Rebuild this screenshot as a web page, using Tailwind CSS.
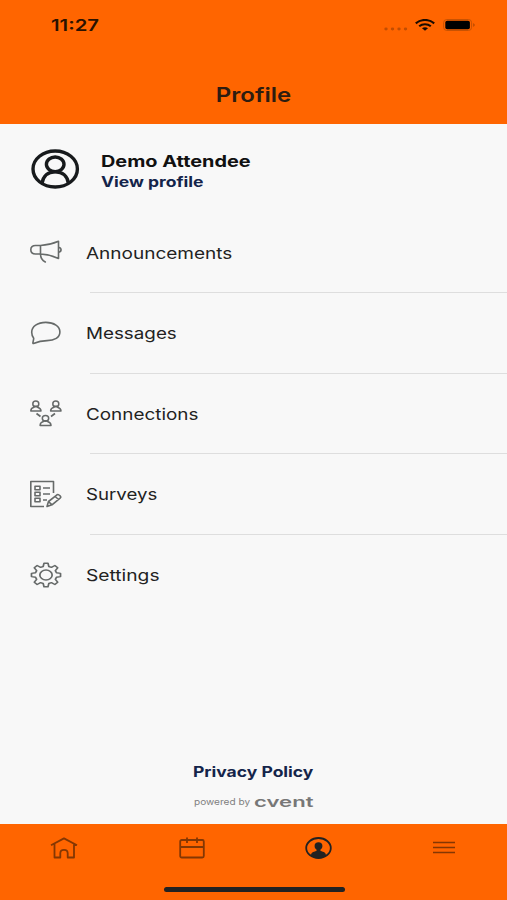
<!DOCTYPE html>
<html lang="en">
<head>
    <meta charset="UTF-8">
    <meta name="viewport" content="width=device-width, initial-scale=1.0">
    <title>Profile</title>
    <script src="https://cdn.jsdelivr.net/npm/@tailwindcss/browser@4"></script>
</head>
<body class="bg-[#f8f8f8] font-['Inter',sans-serif]">
    <div class="w-[507px] h-[900px] flex flex-col overflow-hidden">
        <header class="h-[124px] shrink-0 bg-[#ff6500] flex flex-col">
            <!-- Status bar -->
            <div class="h-[49px] pl-[51px] pr-[31px] flex items-center justify-between">
                <span class="text-[16px] font-semibold text-[#2a1200] origin-left scale-x-[1.27]">11:27</span>
                <div class="flex items-center">
                    <svg class="w-[24px] h-[4px] mt-[9px] mr-[7px]" viewBox="0 0 24 4" fill="#c14d02">
                        <ellipse cx="2" cy="2" rx="1.7" ry="1.4"/>
                        <ellipse cx="8.5" cy="2" rx="1.7" ry="1.4"/>
                        <ellipse cx="15" cy="2" rx="1.7" ry="1.4"/>
                        <ellipse cx="21.5" cy="2" rx="1.7" ry="1.4"/>
                    </svg>
                    <svg class="w-[20px] h-[12px] mr-[8px]" viewBox="0 0 20 12" fill="none" stroke="#1a0b00" stroke-width="2.1">
                        <path d="M.8 4.4C6-.2 14-.2 19.2 4.4"/>
                        <path d="M4.2 7.3C7.400 4.500 12.600 4.500 15.800 7.300"/>
                        <path d="M7 9.300c1.700-1.400 4.300-1.400 6 0L10 11.800z" fill="#1a0b00" stroke="none"/>
                    </svg>
                    <svg class="w-[33px] h-[12px]" viewBox="0 0 33 12">
                        <rect x=".6" y=".5" width="28" height="11" rx="3.2" fill="none" stroke="#c85202"/>
                        <rect x="2.3" y="1.7" width="24.6" height="8.6" rx="1.8" fill="#000"/>
                        <path d="M30.200 4.300c2 .4 2 3 0 3.400z" fill="#b84a02"/>
                    </svg>
                </div>
            </div>
            <h1 class="mt-[31px] text-center text-[20px] leading-[31px] font-semibold text-[#2d1c10] scale-x-[1.2]">Profile</h1>
        </header>

        <main class="flex-1 flex flex-col">
            <div class="h-[88px] pl-[31px] flex items-center">
                <svg class="w-[49px] h-[40px] mr-[21px] mt-[2px]" viewBox="0 0 49 40" fill="none" stroke="#171a1c" stroke-width="3.4">
                    <ellipse cx="24.2" cy="20" rx="22.2" ry="18"/>
                    <ellipse cx="24.2" cy="15.300" rx="8.800" ry="7.300"/>
                    <path d="M11 34.500C12 27 17 22.700 24.200 22.700S36.500 27 37.500 34.500"/>
                </svg>
                <div class="flex flex-col items-start mt-[6px] -ml-[0.5px]">
                    <span class="text-[16px] leading-[21px] font-bold text-[#111] origin-left scale-x-[1.243]">Demo Attendee</span>
                    <span class="text-[14px] leading-[20px] font-bold text-[#14244a] origin-left scale-x-[1.25]">View profile</span>
                </div>
            </div>

            <nav class="text-[16px] text-[#222]">
                <a class="flex h-[81px]">
                    <svg class="w-[32px] h-[24px] ml-[30px] mr-[24px] mt-[28px]" viewBox="0 0 32 24" fill="none" stroke="#666a69" stroke-width="1.6" stroke-linejoin="round" stroke-linecap="round">
                        <path d="M10.500 5.500H5.500C2.500 5.500.8 7 .8 9.800s1.700 4.200 4.700 4.200h5M10.500 5.500V14M10.500 5.500C17 5.200 23 3.700 28.500 1.300V18.500C23 16 17 14.300 10.500 14M10.500 14C10.500 18 12 20.500 15.300 22"/>
                        <path d="M28.800 7.500c3 .3 3 4.400 0 4.700"/>
                    </svg>
                    <span class="leading-[82px] origin-left scale-x-[1.187]">Announcements</span>
                </a>
                <a class="flex h-[81px] relative before:absolute before:top-[-1px] before:left-[90px] before:right-0 before:h-px before:bg-[#dedede]">
                    <svg class="w-[32px] h-[24px] ml-[30px] mr-[24px] mt-[28px]" viewBox="0 0 32 24" fill="none" stroke="#666a69" stroke-width="1.6" stroke-linejoin="round">
                        <path d="M3.700 17.200C2.300 15.500 1.700 13.500 1.700 11.300 1.700 5.500 7.500 1.400 15.800 1.400S29.900 5.500 29.900 11 24.500 19.600 17 19.600C11.500 19.600 8 20.500 3.500 22.500 2 23 3.700 19.500 3.700 17.200z"/>
                    </svg>
                    <span class="leading-[81px] origin-left scale-x-[1.175]">Messages</span>
                </a>
                <a class="flex h-[80px] relative before:absolute before:top-[-1px] before:left-[90px] before:right-0 before:h-px before:bg-[#dedede]">
                    <svg class="w-[32px] h-[27px] ml-[30px] mr-[24px] mt-[26px]" viewBox="0 0 32 27" fill="none" stroke="#666a69" stroke-width="1.5" stroke-linejoin="round">
                        <path d="M.8 11C.8 8.500 2 7.700 4 7.200V6.300H7.500V7.200C9.500 7.700 11 8.500 11 11z"/>
                        <ellipse cx="5.800" cy="3.900" rx="3" ry="2.900"/>
                        <path d="M20.600 11C20.600 8.500 22 7.700 24 7.200V6.300H27.500V7.200C29.500 7.700 31 8.500 31 11z"/>
                        <ellipse cx="25.800" cy="3.900" rx="3" ry="2.900"/>
                        <path d="M10.100 25.400C10.100 22.900 11.500 22.100 13.500 21.600V20.700H17.500V21.600C19.500 22.100 21 22.900 21 25.400z"/>
                        <ellipse cx="15.500" cy="18.300" rx="3.200" ry="2.900"/>
                        <path d="M6.500 13.500l4 3M25 13.500l-4 3" stroke-width="1.700"/>
                    </svg>
                    <span class="leading-[80px] origin-left scale-x-[1.18]">Connections</span>
                </a>
                <a class="flex h-[81px] relative before:absolute before:top-[-1px] before:left-[90px] before:right-0 before:h-px before:bg-[#dedede]">
                    <svg class="w-[32px] h-[28px] ml-[30px] mr-[24px] mt-[26px]" viewBox="0 0 32 28" fill="none" stroke="#666a69" stroke-width="1.6" stroke-linejoin="round">
                        <path d="M23.500 13V1.500H.8V26.500H14"/>
                        <path d="M5 6.200h5v3.600H5zM5 12.200h5v3.600H5zM5 18.200h5v3.600H5zM13 8h7M13 14h7M13 20h4"/>
                        <path d="M17 26.500L18.500 21.500 27 14.800Q28 14.200 29 15L30.400 16.200Q31.200 17 30.400 17.800L22 24.800zM25 16.500l3.700 3M18.500 21.500l3.500 3.300"/>
                    </svg>
                    <span class="leading-[81px] origin-left scale-x-[1.165]">Surveys</span>
                </a>
                <a class="flex h-[80px] relative before:absolute before:top-[-1px] before:left-[90px] before:right-0 before:h-px before:bg-[#dedede]">
                    <svg class="w-[32px] h-[26px] ml-[30px] mr-[24px] mt-[27px]" viewBox="-13 -13 26 26" preserveAspectRatio="none" fill="none" stroke="#666a69" stroke-width="1.4" stroke-linejoin="round">
                        <path d="M-1.600-11.800H1.600L2.300-8.500L4.400-7.600L7.200-9.500L9.500-7.200L7.600-4.400L8.500-2.300L11.800-1.600V1.600L8.500 2.300L7.600 4.400L9.500 7.200L7.200 9.500L4.400 7.600L2.300 8.500L1.600 11.800H-1.600L-2.300 8.500L-4.400 7.600L-7.200 9.500L-9.500 7.200L-7.600 4.400L-8.500 2.300L-11.800 1.600V-1.600L-8.500-2.300L-7.600-4.400L-9.500-7.200L-7.200-9.500L-4.400-7.600L-2.300-8.500z"/>
                        <circle r="5"/>
                    </svg>
                    <span class="leading-[80px] origin-left scale-x-[1.2]">Settings</span>
                </a>
            </nav>

            <div class="mt-auto h-[64px] flex flex-col items-center">
                <a class="text-[14px] leading-[24px] font-bold text-[#14244a] scale-x-[1.25]">Privacy Policy</a>
                <div class="w-[120px] h-[20px] mt-[8px] flex items-center text-[#808080]">
                    <span class="w-[60px] text-[9px] whitespace-nowrap origin-left scale-x-[1.12]">powered by</span>
                    <span class="text-[14px] leading-[16px] font-semibold text-[#777] origin-left scale-x-[1.58]">cvent</span>
                </div>
            </div>
        </main>

        <!-- Tab bar -->
        <footer class="h-[76px] shrink-0 bg-[#ff6500] flex flex-col">
            <div class="h-[47px] pl-[50px] pr-[52px] flex items-center justify-between">
                <svg class="w-[28px] h-[22px]" viewBox="0 0 28 22" fill="none" stroke="#843703" stroke-width="1.8" stroke-linejoin="round">
                    <path d="M1 8.300L14 1.400L27 8.300M4.500 6.800V20.500H10.300V16.200C10.300 11.700 17.700 11.700 17.700 16.200V20.500H24V6.800"/>
                </svg>
                <svg class="w-[26px] h-[22px]" viewBox="0 0 26 22" fill="none" stroke="#843703" stroke-width="1.8">
                    <rect x="1.200" y="3" width="23.600" height="17.500" rx="1.500"/>
                    <path d="M1 10H25M8 .5V6M18 .5V6"/>
                </svg>
                <svg class="w-[27px] h-[22px] -ml-[1px]" viewBox="0 0 27 22" fill="#222">
                    <ellipse cx="13.500" cy="11" rx="12.300" ry="10" fill="none" stroke="#222" stroke-width="1.800"/>
                    <path d="M6 18.800C6 15.500 8 14.700 11.500 13.900V12.600C10 11.500 9.600 10.500 9.600 8.700 9.600 6.500 11 5.200 13.500 5.200S17.400 6.500 17.400 8.700C17.400 10.500 17 11.500 15.500 12.600V13.900C19 14.700 21 15.500 21 18.800 16.500 21.500 10.500 21.500 6 18.800z"/>
                </svg>
                <svg class="w-[22px] h-[22px]" viewBox="0 0 22 22" stroke="#843703" stroke-width="1.600">
                    <path d="M0 5.500H22M0 10.500H22M0 15.500H22"/>
                </svg>
            </div>
            <div class="w-[181px] h-[5px] mt-[16px] mx-auto rounded-full bg-[#222] translate-x-[1px]"></div>
        </footer>
    </div>
</body>
</html>
